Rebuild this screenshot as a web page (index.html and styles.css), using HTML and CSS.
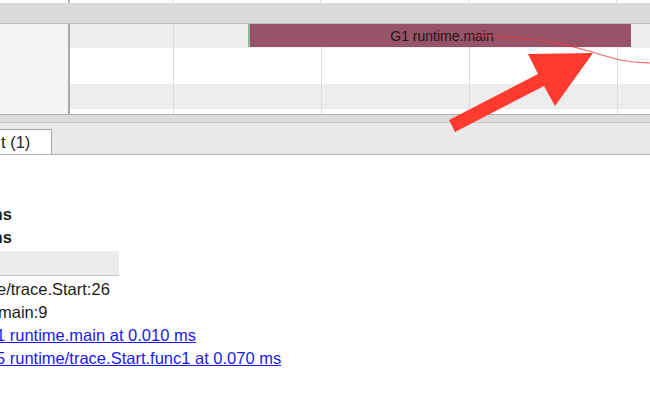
FILE: index.html
```html
<!DOCTYPE html>
<html>
<head>
<meta charset="utf-8">
<link rel="stylesheet" href="styles.css">
</head>
<body>
<div class="page">
  <div class="timeline">
    <div class="topstrip"></div>
    <div class="ruler"></div>
    <div class="tracks">
      <div class="labels"></div>
      <div class="lanes">
        <div class="row row-gray"></div>
        <div class="row row-white-tall"></div>
        <div class="row row-gray2"></div>
        <div class="row row-white-short"></div>
        <div class="grid"></div>
        <div class="slice"><span class="slice-edge"></span><span class="slice-title">G1 runtime.main</span></div>
      </div>
    </div>
  </div>
  <div class="splitter"></div>
  <div class="tabbar">
    <div class="tab"><span class="tab-label">t (1)</span></div>
  </div>
  <div class="details">
    <div class="line bold"><span class="cut-ms">ms</span></div>
    <div class="line bold"><span class="cut-ms">ms</span></div>
    <div class="thead"></div>
    <div class="line rows-start"><span class="cut-e">e/trace.Start:26</span></div>
    <div class="line"><span class="cut-m">main:9</span></div>
    <div class="line"><a class="flow cut-1" href="#">1 runtime.main at 0.010 ms</a></div>
    <div class="line"><a class="flow cut-5" href="#">5 runtime/trace.Start.func1 at 0.070 ms</a></div>
  </div>
  <svg class="annot" width="650" height="400" viewBox="0 0 650 400">
    <path d="M468,36 C520,35 560,42 592,52 S630,62 650,63" fill="none" stroke="#f23a3a" stroke-width="1.2" opacity="0.75"/>
    <polygon points="449,120 538,74 528,54 593,53 555,106 544,86 455,132" fill="#ff3b2f"/>
  </svg>
</div>
</body>
</html>
```

FILE: styles.css
```css
html, body {
  margin: 0;
  padding: 0;
}
body {
  width: 650px;
  height: 400px;
  overflow: hidden;
  background: #ffffff;
  font-family: "Liberation Sans", Arial, sans-serif;
  color: #1c1c1c;
}
.page {
  position: relative;
  width: 650px;
  height: 400px;
  overflow: hidden;
}
.timeline {
  display: flex;
  flex-direction: column;
}
.topstrip {
  height: 3px;
  background-color: #ffffff;
  background-image:
    linear-gradient(to right, transparent 68px, #b5b5b5 68px, #b5b5b5 70px, transparent 70px),
    repeating-linear-gradient(to right, transparent 0, transparent 102px, #dadada 102px, #dadada 103px, transparent 103px, transparent 148px);
  background-position: 0 0, 70px 0;
  background-repeat: no-repeat, repeat-x;
}
.ruler {
  height: 20px;
  background: #dbdbdb;
  border-bottom: 1px solid #b9b9b9;
}
.tracks {
  display: flex;
  height: 90px;
}
.labels {
  width: 68px;
  background: #f3f4f6;
  border-right: 2px solid #a9a9a9;
}
.lanes {
  position: relative;
  flex: 1;
  display: flex;
  flex-direction: column;
}
.row { flex: none; }
.row-gray { height: 24px; background: #ededed; }
.row-white-tall { height: 36px; background: #ffffff; }
.row-gray2 { height: 25px; background: #ededed; }
.row-white-short { height: 5px; background: #ffffff; }
.grid {
  position: absolute;
  inset: 0;
  background-image: repeating-linear-gradient(to right, transparent 0, transparent 103px, #dcdcdc 103px, #dcdcdc 104px, transparent 104px, transparent 148px);
}
.slice {
  position: absolute;
  left: 178px;
  top: 0;
  width: 383px;
  height: 23px;
  display: flex;
  align-items: center;
  background: #975468;
}
.slice-edge {
  width: 2px;
  align-self: stretch;
  background: #94b493;
}
.slice-title {
  flex: 1;
  text-align: center;
  font-size: 14px;
  color: #1e1416;
  padding-left: 3px;
}
.splitter {
  height: 7px;
  background: #dcdcdc;
  border-top: 1px solid #b0b0b0;
  border-bottom: 1px solid #c6c6c6;
}
.tabbar {
  height: 25px;
  padding-top: 6px;
  background: #e9e9e9;
  border-bottom: 1px solid #b3b3b3;
  display: flex;
  align-items: flex-end;
}
.tab {
  width: 51px;
  height: 24px;
  background: #ffffff;
  border-top: 1px solid #a8a8a8;
  border-right: 1px solid #a8a8a8;
  display: flex;
  align-items: center;
}
.tab-label {
  font-size: 16.5px;
  padding-left: 1px;
  color: #1f2330;
}
.details {
  padding-top: 48px;
  font-size: 16.5px;
}
.line {
  height: 23px;
  line-height: 23px;
  white-space: nowrap;
}
.bold { font-weight: bold; }
.cut-ms { margin-left: -12px; }
.cut-e { margin-left: -3px; }
.cut-m { margin-left: -2px; }
.cut-1 { margin-left: -4px; }
.cut-5 { margin-left: -4px; }
.thead {
  margin-top: 2px;
  width: 119px;
  height: 24px;
  background: #ececec;
  border-bottom: 1px solid #c9c9c9;
}
.rows-start { margin-top: 2px; }
.flow {
  color: #1a1aee;
  text-decoration: underline;
}
.annot {
  position: absolute;
  left: 0;
  top: 0;
  pointer-events: none;
}
```
